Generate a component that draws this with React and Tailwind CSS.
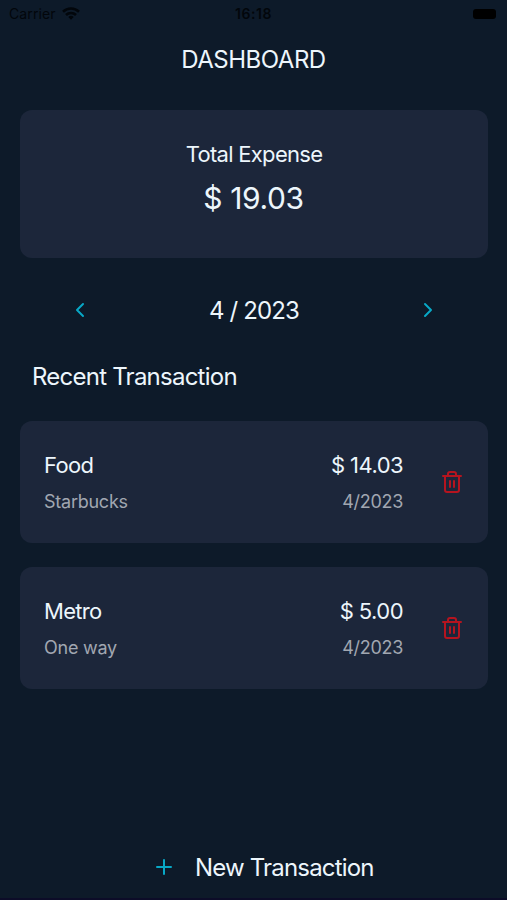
const transactions = [
  { id: 1, category: 'Food', note: 'Starbucks', amount: '$ 14.03', date: '4/2023' },
  { id: 2, category: 'Metro', note: 'One way', amount: '$ 5.00', date: '4/2023' },
];

function Icon({ className, children }) {
  return (
    <svg
      className={`size-6 shrink-0 ${className}`}
      viewBox="0 0 24 24"
      fill="none"
      stroke="currentColor"
      strokeWidth="2"
      strokeLinecap="round"
      strokeLinejoin="round"
    >
      {children}
    </svg>
  );
}

function StatusBar() {
  return (
    <div className="grid h-[28px] grid-cols-3 items-center px-[9px] text-[#02060b]">
      <div className="flex items-center gap-[6px]">
        <span className="text-[14px] leading-none tracking-[0.1px]">Carrier</span>
        <svg className="-mt-[2px] h-[13px] w-[18px]" viewBox="0 0 18 13" fill="none" stroke="currentColor" strokeWidth="2.6">
          <path d="M1 4.8a11.5 11.5 0 0 1 16 0" />
          <path d="M4 8a7.2 7.2 0 0 1 10 0" />
          <path d="M9 12.8 6.3 10a3.9 3.9 0 0 1 5.4 0Z" fill="currentColor" stroke="none" />
        </svg>
      </div>
      <span className="text-center text-[14px] leading-none font-semibold tracking-[0.6px]">16:18</span>
      <span className="mr-[2px] h-[10px] w-[23px] justify-self-end rounded-[3px] bg-black" />
    </div>
  );
}

function TransactionCard({ category, note, amount, date }) {
  return (
    <div className="flex h-[122px] items-center rounded-xl bg-[#1c263a] pr-[24px] pl-6">
      <div className="flex-1 pt-[2px]">
        <p className="text-[22px] leading-[36px] tracking-[-0.7px]">{category}</p>
        <p className="mt-px text-[18px] leading-[36px] tracking-[-0.25px] text-[#a1a7b1]">{note}</p>
      </div>
      <div className="pt-[2px] text-right">
        <p className="text-[22px] leading-[36px] tracking-[-0.55px]">{amount}</p>
        <p className="mt-px text-[18px] leading-[36px] tracking-[-0.3px] text-[#a1a7b1]">{date}</p>
      </div>
      <Icon className="ml-[37px] text-[#b5141f]">
        <path d="M3 6h18" />
        <path d="M19 6v14a2 2 0 0 1-2 2H7a2 2 0 0 1-2-2V6m3 0V4a2 2 0 0 1 2-2h4a2 2 0 0 1 2 2v2" />
        <path d="M10 11v6M14 11v6" />
      </Icon>
    </div>
  );
}

export default function App() {
  return (
    <div className="flex h-[900px] w-[507px] flex-col border-b-2 border-[#0c0c28] bg-[#0d1a29] font-['Inter',sans-serif] text-[#edf6fc]">
      <StatusBar />
      <h1 className="mt-[15px] text-center text-[24px] leading-[34px] tracking-[-0.5px]">DASHBOARD</h1>
      <main className="mt-[33px] flex flex-col pr-[19px] pl-[20px]">
        <section className="h-[148px] rounded-xl bg-[#1c263a] pt-[29px] text-center">
          <p className="text-[22px] leading-[30px] tracking-[-0.7px]">Total Expense</p>
          <p className="mt-[9px] pr-px text-[30px] leading-[40px] tracking-[-0.35px]">$ 19.03</p>
        </section>
        <div className="mt-[36px] flex h-[32px] items-center justify-between px-[48px] text-[#08a8c6]">
          <Icon className=""><path d="m15 18-6-6 6-6" /></Icon>
          <span className="mt-[2px] text-[24px] leading-[32px] tracking-[-0.85px] text-[#edf6fc]">4 / 2023</span>
          <Icon className=""><path d="m9 18 6-6-6-6" /></Icon>
        </div>
        <h2 className="mt-[34px] ml-[12px] text-[24px] leading-[34px] tracking-[-0.76px]">Recent Transaction</h2>
        <div className="mt-[27px] flex flex-col gap-[24px]">
          {transactions.map((item) => (
            <TransactionCard key={item.id} {...item} />
          ))}
        </div>
      </main>
      <button className="mt-auto mb-[13px] ml-[152px] flex items-center gap-[19px] self-start">
        <Icon className="-mt-[2px] text-[#08a8c6]"><path d="M12 5v14M5 12h14" /></Icon>
        <span className="text-[24px] leading-[34px] tracking-[-0.82px]">New Transaction</span>
      </button>
    </div>
  );
}
